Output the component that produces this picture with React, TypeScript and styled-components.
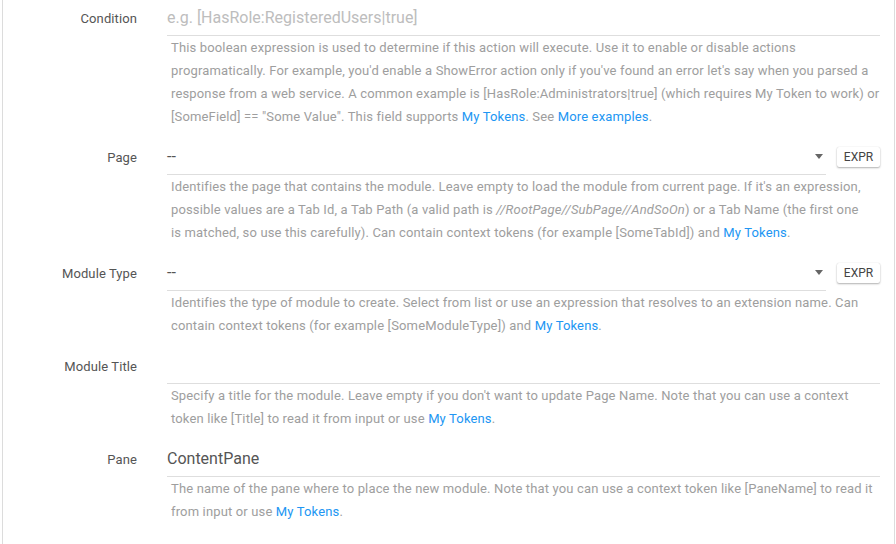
import React from "react";
import styled, { createGlobalStyle } from "styled-components";

const GlobalStyle = createGlobalStyle`
  html, body { margin: 0; padding: 0; background: #fff; }
  body { font-family: Roboto, "Liberation Sans", Arial, sans-serif; }
  * { box-sizing: border-box; }
`;

const Panel = styled.div`
  margin: 0 1px 0 2px;
  min-height: 544px;
  border-left: 1px solid #dcdcdc;
  border-right: 1px solid #dcdcdc;
  padding: 0 14px 0 0;
  display: flex;
  flex-direction: column;
  gap: 11px;
`;

const Row = styled.div`
  display: grid;
  grid-template-columns: 134px 1fr;
  column-gap: 30px;
`;

const Label = styled.label`
  text-align: right;
  font-size: 13px;
  line-height: 38px;
  height: 36px;
  color: #555;
  letter-spacing: 0.1px;
`;

const Field = styled.div`
  display: flex;
  flex-direction: column;
  min-width: 0;
`;

const TextInput = styled.input`
  display: block;
  width: 100%;
  height: 36px;
  border: none;
  border-bottom: 1px solid #dedede;
  outline: none;
  padding: 0;
  margin: 0;
  background: transparent;
  font-family: Roboto, "Liberation Sans", Arial, sans-serif;
  font-size: 16px;
  color: #555;
  &::placeholder { color: #bdbdbd; opacity: 1; }
`;

const SelectRow = styled.div`
  display: flex;
  align-items: center;
  gap: 11px;
`;

const SelectBox = styled.div`
  flex: 1;
  display: flex;
  align-items: center;
  height: 36px;
  border-bottom: 1px solid #dedede;
  font-size: 16px;
  color: #555;
  padding-right: 3px;
`;

const SelectValue = styled.span`
  flex: 1;
`;

const Caret = styled.svg`
  width: 8px;
  height: 5px;
  fill: #666;
`;

const ExprButton = styled.button`
  width: 43px;
  height: 20px;
  margin-top: -1px;
  padding: 0;
  border: none;
  border-radius: 2px;
  background: #fff;
  box-shadow: 0 1px 2px rgba(0, 0, 0, 0.3), 0 0 1px rgba(0, 0, 0, 0.15);
  font-family: Roboto, "Liberation Sans", Arial, sans-serif;
  font-size: 12px;
  color: #444;
  cursor: pointer;
`;

const Desc = styled.p`
  margin: 0;
  padding: 0 0 0 4px;
  font-size: 13px;
  line-height: 23px;
  letter-spacing: 0.15px;
  color: #9e9e9e;
`;

const Link = styled.a`
  color: #2196f3;
  text-decoration: none;
`;

const Select: React.FC = () => (
  <SelectRow>
    <SelectBox>
      <SelectValue>--</SelectValue>
      <Caret viewBox="0 0 8 5">
        <polygon points="0,0 8,0 4,5" />
      </Caret>
    </SelectBox>
    <ExprButton type="button">EXPR</ExprButton>
  </SelectRow>
);

export default function App() {
  return (
    <>
      <GlobalStyle />
      <Panel>
        <Row>
          <Label>Condition</Label>
          <Field>
            <TextInput placeholder="e.g. [HasRole:RegisteredUsers|true]" />
            <Desc>
              This boolean expression is used to determine if this action will execute. Use it to enable or disable actions
              <br />
              programatically. For example, you'd enable a ShowError action only if you've found an error let's say when you parsed a
              <br />
              response from a web service. A common example is [HasRole:Administrators|true] (which requires My Token to work) or
              <br />
              [SomeField] == "Some Value". This field supports <Link href="#">My Tokens</Link>. See{" "}
              <Link href="#">More examples</Link>.
            </Desc>
          </Field>
        </Row>
        <Row>
          <Label>Page</Label>
          <Field>
            <Select />
            <Desc>
              Identifies the page that contains the module. Leave empty to load the module from current page. If it's an expression,
              <br />
              possible values are a Tab Id, a Tab Path (a valid path is <i>//RootPage//SubPage//AndSoOn</i>) or a Tab Name (the first one
              <br />
              is matched, so use this carefully). Can contain context tokens (for example [SomeTabId]) and{" "}
              <Link href="#">My Tokens</Link>.
            </Desc>
          </Field>
        </Row>
        <Row>
          <Label>Module Type</Label>
          <Field>
            <Select />
            <Desc>
              Identifies the type of module to create. Select from list or use an expression that resolves to an extension name. Can
              <br />
              contain context tokens (for example [SomeModuleType]) and <Link href="#">My Tokens</Link>.
            </Desc>
          </Field>
        </Row>
        <Row>
          <Label>Module Title</Label>
          <Field>
            <TextInput />
            <Desc>
              Specify a title for the module. Leave empty if you don't want to update Page Name. Note that you can use a context
              <br />
              token like [Title] to read it from input or use <Link href="#">My Tokens</Link>.
            </Desc>
          </Field>
        </Row>
        <Row>
          <Label>Pane</Label>
          <Field>
            <TextInput defaultValue="ContentPane" />
            <Desc>
              The name of the pane where to place the new module. Note that you can use a context token like [PaneName] to read it
              <br />
              from input or use <Link href="#">My Tokens</Link>.
            </Desc>
          </Field>
        </Row>
      </Panel>
    </>
  );
}
